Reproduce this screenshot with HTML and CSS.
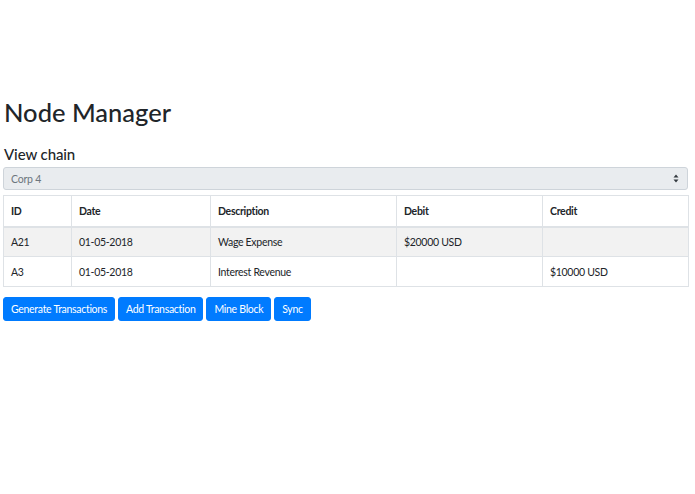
FILE: index.html
```html
<!DOCTYPE html>
<html lang="en">
<head>
<meta charset="utf-8">
<title>Node Manager</title>
<link rel="stylesheet" href="styles.css">
</head>
<body>
<div class="container">
  <h1 class="title">Node Manager</h1>
  <h5 class="subtitle">View chain</h5>
  <div class="select">
    <span class="select-value">Corp 4</span>
    <svg class="select-arrows" width="6" height="9" viewBox="0 0 6 9"><path d="M3 0.5 L5.5 3.5 H0.5 Z M3 8.5 L5.5 5.5 H0.5 Z" fill="#343a40"/></svg>
  </div>
  <table class="ledger">
    <colgroup>
      <col class="c-id"><col class="c-date"><col class="c-desc"><col class="c-debit"><col class="c-credit">
    </colgroup>
    <thead>
      <tr><th>ID</th><th>Date</th><th>Description</th><th>Debit</th><th>Credit</th></tr>
    </thead>
    <tbody>
      <tr class="striped"><td>A21</td><td>01-05-2018</td><td>Wage Expense</td><td>$20000 USD</td><td></td></tr>
      <tr><td>A3</td><td>01-05-2018</td><td>Interest Revenue</td><td></td><td>$10000 USD</td></tr>
    </tbody>
  </table>
  <div class="actions">
    <button class="btn">Generate Transactions</button>
    <button class="btn">Add Transaction</button>
    <button class="btn">Mine Block</button>
    <button class="btn">Sync</button>
  </div>
</div>
</body>
</html>
```
FILE: styles.css
```css
html, body {
  margin: 0;
  padding: 0;
  background: #ffffff;
}
body {
  font-family: Lato, "Noto Sans", sans-serif;
  color: #212529;
}
.container {
  padding: 95px 7px 0 3px;
}
.title {
  margin: 0 0 0 1px;
  font-size: 25.5px;
  font-weight: 500;
  line-height: 34px;
}
.subtitle {
  margin: 15px 0 0 1px;
  font-size: 15px;
  font-weight: 500;
  line-height: 20px;
  letter-spacing: -0.1px;
}
.select {
  margin-top: 3px;
  height: 23px;
  box-sizing: border-box;
  background: #e9ecef;
  border: 1px solid #ced4da;
  border-radius: 3px;
  display: flex;
  align-items: center;
  justify-content: space-between;
  padding: 0 8px 0 7px;
}
.select-value {
  font-size: 10.5px;
  letter-spacing: -0.2px;
  color: #6c757d;
}
.ledger {
  margin-top: 5px;
  width: 100%;
  border-collapse: collapse;
  table-layout: fixed;
  font-size: 10.5px;
  letter-spacing: -0.3px;
}
.c-id { width: 68px; }
.c-date { width: 139px; }
.c-desc { width: 186px; }
.c-debit { width: 146px; }
.c-credit { width: 146px; }
.ledger th, .ledger td {
  border: 1px solid #dee2e6;
  height: 30px;
  box-sizing: border-box;
  padding: 0 7px;
  text-align: left;
  vertical-align: middle;
}
.ledger th {
  font-weight: 700;
  height: 31px;
  border-bottom-width: 2px;
}
.ledger td {
  color: #212529;
}
.striped {
  background: #f2f2f2;
}
.actions {
  margin-top: 10px;
  display: flex;
  gap: 3px;
}
.btn {
  font-family: inherit;
  font-size: 10.5px;
  letter-spacing: -0.3px;
  color: #ffffff;
  background: #007bff;
  border: 1px solid #007bff;
  border-radius: 3px;
  height: 24px;
  padding: 0 7px;
  cursor: pointer;
}
```
